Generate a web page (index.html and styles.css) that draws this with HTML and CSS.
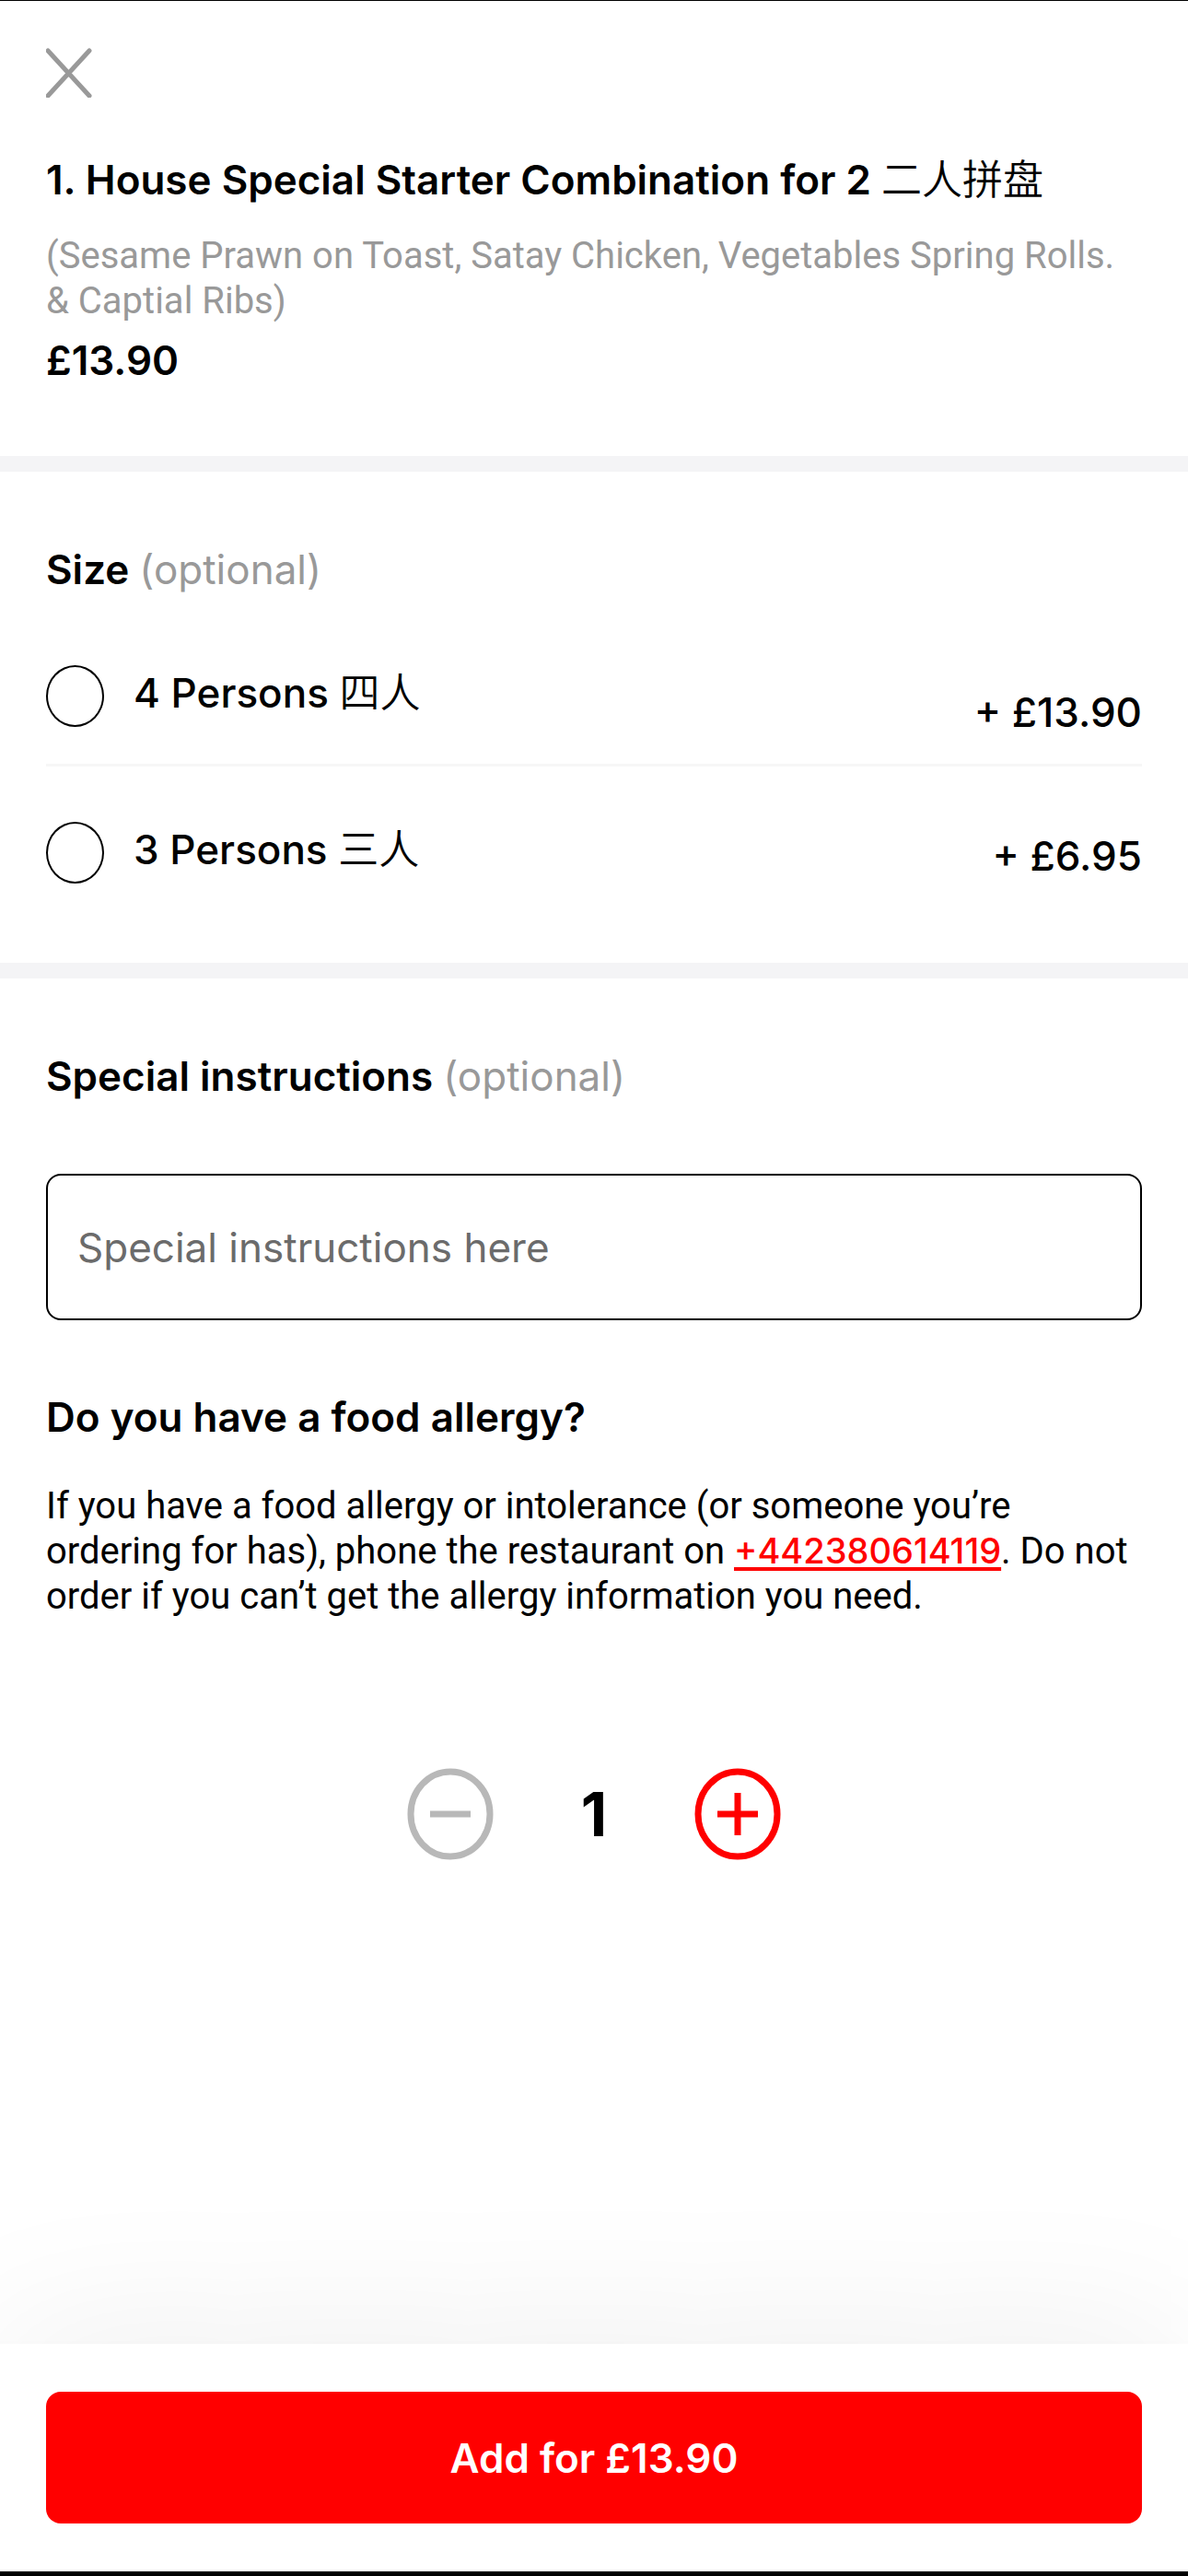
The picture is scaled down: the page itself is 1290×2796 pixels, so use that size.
FILE: index.html
```
<!DOCTYPE html>
<html lang="en">

<head>
<meta charset="utf-8">
<meta name="viewport" content="width=device-width, initial-scale=1">
<title>House Special Starter Combination</title>
<link rel="stylesheet" href="styles.css">
</head>

<body>

<main>
<section class="item">
<button class="close" aria-label="Close">
<svg width="50" height="54" viewBox="0 0 50 54" fill="none" stroke="#999" stroke-width="5" stroke-linecap="round">
<path d="M2 3 L47 52 M47 3 L2 52"/>
</svg>
</button>
<h1>1. House Special Starter Combination for 2 <span class="zh" lang="zh">二人拼盘</span></h1>
<p class="description">(Sesame Prawn on Toast, Satay Chicken, Vegetables Spring Rolls. &amp; Captial Ribs)</p>
<p class="price">£13.90</p>
</section>

<section class="size">
<h2>Size <span class="optional">(optional)</span></h2>
<div class="option">
<input type="radio" name="size" id="four">
<label for="four">4 Persons <span class="zh" lang="zh">四人</span></label>
<span class="extra">+ £13.90</span>
</div>
<div class="option">
<input type="radio" name="size" id="three">
<label for="three">3 Persons <span class="zh" lang="zh">三人</span></label>
<span class="extra">+ £6.95</span>
</div>
</section>

<section class="instructions">
<h2><label for="notes">Special instructions <span class="optional">(optional)</span></label></h2>
<input type="text" id="notes" placeholder="Special instructions here">

<h2>Do you have a food allergy?</h2>
<p class="allergy">If you have a food allergy or intolerance (or someone you’re ordering for has), phone the restaurant on <a href="tel:+442380614119">+442380614119</a>. Do not order if you can’t get the allergy information you need.</p>

<div class="quantity">
<button class="minus" aria-label="Remove one">
<svg width="94" height="100" viewBox="0 0 94 100" fill="none" stroke="#b8b8b8" stroke-width="7">
<ellipse cx="47" cy="50" rx="43" ry="46"/>
<path d="M25 50 H69"/>
</svg>
</button>
<output id="count">1</output>
<button class="plus" aria-label="Add one">
<svg width="94" height="100" viewBox="0 0 94 100" fill="none" stroke="#f00" stroke-width="7">
<ellipse cx="47" cy="50" rx="43" ry="46"/>
<path d="M25 50 H69 M47 27 V73"/>
</svg>
</button>
</div>
</section>
</main>

<footer>
<button class="add">Add for £13.90</button>
</footer>

</body>
</html>
```

FILE: styles.css
```
* {
    box-sizing: border-box;
}

body {
    display: flex;
    flex-direction: column;
    min-height: 100vh;
    margin: 0;
    border-top: 1px solid black;
    border-bottom: 5px solid black;

    font-family: Inter, "Noto Sans CJK SC", sans-serif;
    font-size: 44px;
    line-height: 52px;
    color: black;
    background: white;
}

main {
    flex: 1;
}

section {
    padding-left: 50px;
    padding-right: 50px;
}

button {
    display: block;
    padding: 0;
    border: none;
    background: none;
    font: inherit;
    cursor: pointer;
}

svg {
    display: block;
}

h1, h2 {
    margin: 0;
    font-size: 44px;
    font-weight: 600;
}

p {
    margin: 0;
}

.zh {
    font-family: "Noto Sans CJK SC", sans-serif;
    font-weight: 350;
    line-height: 1;
}

.optional {
    font-weight: 400;
    color: #999;
}

.item {
    padding-top: 51px;
    padding-bottom: 78px;
}

.item h1 {
    margin-top: 63px;
}

.description, .allergy {
    font-family: Roboto, sans-serif;
    font-size: 40px;
    line-height: 49px;
}

.description {
    margin-top: 32px;
    color: #999;
}

.price {
    margin-top: 14px;
    font-weight: 600;
}

.size, .instructions {
    border-top: 17px solid #f4f4f6;
}

.size {
    padding-top: 80px;
    padding-bottom: 52px;
}

.size h2 {
    margin-bottom: 78px;
}

.option {
    display: flex;
    align-items: flex-start;
    padding-bottom: 26px;
    font-weight: 500;
    line-height: 60px;
}

.option + .option {
    padding-top: 60px;
    padding-bottom: 28px;
    border-top: 3px solid #f7f7f7;
}

.option input {
    appearance: none;
    flex: none;
    width: 63px;
    height: 67px;
    margin: 0 32px 14px 0;
    border: 2px solid black;
    border-radius: 50%;
}

.option + .option input {
    margin-bottom: 6px;
}

.option input:checked {
    border-width: 16px;
    border-color: red;
}

.option label {
    flex: 1;
}

.extra {
    align-self: flex-end;
}

.option + .option .extra {
    align-self: center;
}

.instructions {
    padding-top: 80px;
}

.instructions input {
    display: block;
    width: 100%;
    height: 159px;
    margin-top: 80px;
    margin-bottom: 79px;
    padding: 0 32px;
    border: 2px solid black;
    border-radius: 16px;
    font: inherit;
    color: black;
}

.instructions input::placeholder {
    color: #6b6b6b;
    opacity: 1;
}

.allergy {
    margin-top: 46px;
}

.allergy a {
    font-family: Inter, sans-serif;
    font-size: 38px;
    font-weight: 500;
    color: red;
    text-decoration-thickness: 4px;
    text-underline-offset: 4px;
    text-decoration-skip-ink: none;
}

.quantity {
    display: flex;
    justify-content: center;
    align-items: center;
    margin-top: 162px;
    margin-bottom: 80px;
}

.quantity output {
    width: 218px;
    text-align: center;
    font-size: 66px;
    font-weight: 700;
}

footer {
    padding: 52px 50px;
    background: white;
    box-shadow: 0 0 180px rgba(0, 0, 0, 0.08);
}

.add {
    width: 100%;
    height: 143px;
    border-radius: 16px;
    background: red;
    font-weight: 600;
    color: white;
}
```
